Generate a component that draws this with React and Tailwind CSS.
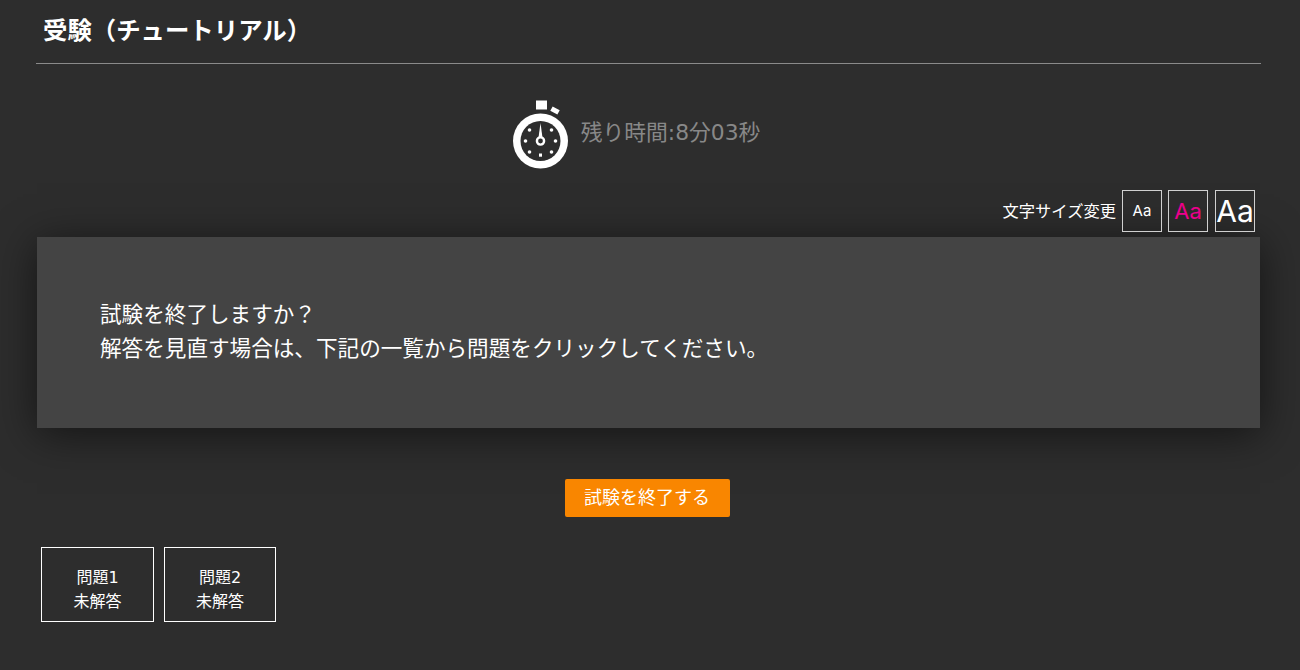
export default function App() {
  return (
    <div className="min-h-[670px] bg-[#2d2d2d] text-white font-['DejaVu_Sans','Noto_Sans_CJK_JP',sans-serif] overflow-hidden">
      <div className="ml-[36px] w-[1225px]">
        <div className="h-[64px] border-b border-[#8a8a8a] pl-[7px] pt-[13px] text-[24.4px] leading-[36px] font-bold">受験（チュートリアル）</div>
        <div className="flex items-start justify-center h-[126px] pt-[36px] pr-[25px]">
          <svg width="57" height="69" viewBox="0 0 57 69" className="block">
            <rect x="24" y="0.5" width="11" height="9" fill="#fff" />
            <rect x="39" y="8" width="8" height="5" fill="#fff" transform="rotate(28 43 10.5)" />
            <circle cx="28.5" cy="41" r="27.5" fill="#fff" />
            <circle cx="28.5" cy="41" r="20" fill="#2d2d2d" />
            <path d="M28.5 23 L30.4 37 L26.6 37 Z" fill="#fff" />
            <circle cx="28.5" cy="41" r="3.6" fill="none" stroke="#fff" strokeWidth="2.4" />
            <g fill="#fff">
              <rect x="27" y="53.5" width="3" height="3.2" />
              <circle cx="39.5" cy="30" r="1.8" />
              <circle cx="17.5" cy="30" r="1.8" />
              <circle cx="43.5" cy="41" r="1.8" />
              <circle cx="13.5" cy="41" r="1.8" />
              <circle cx="39.5" cy="52" r="1.8" />
              <circle cx="17.5" cy="52" r="1.8" />
            </g>
          </svg>
          <div className="ml-[12px] mt-[16px] text-[21.8px] leading-[34px] text-[#888888]">残り時間:8分03秒</div>
        </div>
        <div className="flex items-center justify-end h-[42px] pr-[6px] text-[16.3px]">
          <span className="mr-[6px] mt-[2px]">文字サイズ変更</span>
          <button className="w-[40px] h-[42px] border border-[#d0d0d0] font-['Inter'] text-[15px]">Aa</button>
          <button className="w-[40px] h-[42px] ml-[6px] border border-[#d0d0d0] font-['Inter'] text-[22px] text-[#ec008c]">Aa</button>
          <button className="w-[40px] h-[42px] ml-[7px] border border-[#d0d0d0] font-['Inter'] text-[30px] leading-none">Aa</button>
        </div>
        <div className="mt-[5px] mx-[1px] h-[191px] bg-[#444444] pl-[63px] pt-[61px] text-[21.6px] leading-[34px] shadow-[0_6px_40px_rgba(0,0,0,0.55)]">
          <p>試験を終了しますか？</p>
          <p>解答を見直す場合は、下記の一覧から問題をクリックしてください。</p>
        </div>
        <div className="flex justify-center mt-[51px] pr-[3px]">
          <button className="w-[165px] h-[38px] pb-[2px] bg-[#f98600] rounded-[2px] text-[18px]">試験を終了する</button>
        </div>
        <div className="flex mt-[30px] ml-[5px] gap-[10px] text-[16px] leading-[24px] text-center">
          <div className="w-[113px] h-[75px] border border-white flex flex-col justify-center pt-[11px]"><span>問題1</span><span>未解答</span></div>
          <div className="w-[112px] h-[75px] border border-white flex flex-col justify-center pt-[11px]"><span>問題2</span><span>未解答</span></div>
        </div>
      </div>
    </div>
  );
}
